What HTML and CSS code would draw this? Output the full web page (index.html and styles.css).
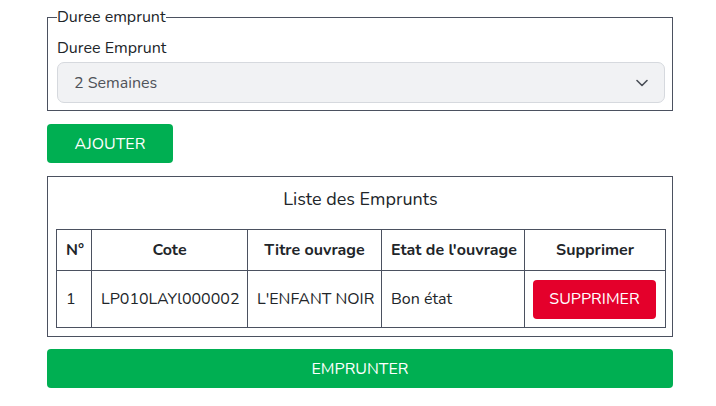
FILE: index.html
```html
<!DOCTYPE html>
<html lang="fr">
<head>
<meta charset="utf-8">
<title>Emprunt</title>
<link rel="stylesheet" href="styles.css">
</head>
<body>
<div class="page">
  <fieldset class="duree">
    <legend>Duree emprunt</legend>
    <label class="label">Duree Emprunt</label>
    <div class="select">
      <span>2 Semaines</span>
      <svg width="12" height="8" viewBox="0 0 12 8"><path d="M1 1.5 L6 6.5 L11 1.5" fill="none" stroke="#4a4f57" stroke-width="1.6" stroke-linecap="round" stroke-linejoin="round"/></svg>
    </div>
  </fieldset>
  <button class="btn btn-green btn-add">AJOUTER</button>
  <section class="box">
    <h2 class="box-title">Liste des Emprunts</h2>
    <table class="tbl">
      <colgroup>
        <col class="c1"><col class="c2"><col class="c3"><col class="c4"><col class="c5">
      </colgroup>
      <thead>
        <tr><th>N°</th><th>Cote</th><th>Titre ouvrage</th><th>Etat de l'ouvrage</th><th>Supprimer</th></tr>
      </thead>
      <tbody>
        <tr><td>1</td><td>LP010LAYl000002</td><td>L'ENFANT NOIR</td><td>Bon état</td><td class="act"><button class="btn btn-red">SUPPRIMER</button></td></tr>
      </tbody>
    </table>
  </section>
  <button class="btn btn-green btn-block">EMPRUNTER</button>
</div>
</body>
</html>
```
FILE: styles.css
```css
* { box-sizing: border-box; }
html, body { margin: 0; padding: 0; background: #fff; }
body {
  font-family: "Nunito", "Lato", "Open Sans", sans-serif;
  font-size: 16px;
  color: #212529;
}
.page {
  width: 626px;
  margin-left: 47px;
  padding-top: 8px;
  display: flex;
  flex-direction: column;
  align-items: flex-start;
}
.duree {
  width: 626px;
  margin: 0;
  border: 1px solid #4b5160;
  padding: 0 7px 7px 9px;
}
.duree legend {
  padding: 0;
  margin-left: 0;
  font-size: 16px;
  line-height: 18px;
}
.label {
  display: block;
  margin-top: 10px;
  line-height: 24px;
  margin-bottom: 2px;
}
.select {
  height: 41px;
  background: #f1f2f4;
  border: 1px solid #d6d9de;
  border-radius: 7px;
  display: flex;
  align-items: center;
  justify-content: space-between;
  padding: 0 16px 0 16px;
  color: #4f5359;
}
.btn {
  font-family: inherit;
  font-size: 16px;
  border: none;
  color: #fff;
  border-radius: 4px;
  height: 39px;
  cursor: pointer;
}
.btn-green { background: #00af52; }
.btn-red { background: #e4002b; width: 123px; }
.btn-add { width: 126px; margin-top: 13px; }
.btn-block { width: 626px; margin-top: 12px; }
.box {
  width: 626px;
  margin-top: 13px;
  border: 1px solid #4b5160;
  padding: 0 7px 8px 8px;
}
.box-title {
  margin: 0;
  font-size: 18px;
  font-weight: 400;
  text-align: center;
  line-height: 24px;
  padding-top: 10px;
  margin-bottom: 18px;
}
.tbl {
  width: 609px;
  border-collapse: collapse;
  table-layout: fixed;
}
.c1 { width: 35px; }
.c2 { width: 156px; }
.c3 { width: 134px; }
.c4 { width: 143px; }
.c5 { width: 141px; }
.tbl th, .tbl td {
  border: 1px solid #4b5160;
  padding: 0 9px;
  white-space: nowrap;
}
.tbl th {
  height: 41px;
  text-align: center;
  font-weight: 700;
}
.tbl td {
  height: 57px;
  text-align: left;
}
.tbl td.act { padding: 0 8px; }
```
